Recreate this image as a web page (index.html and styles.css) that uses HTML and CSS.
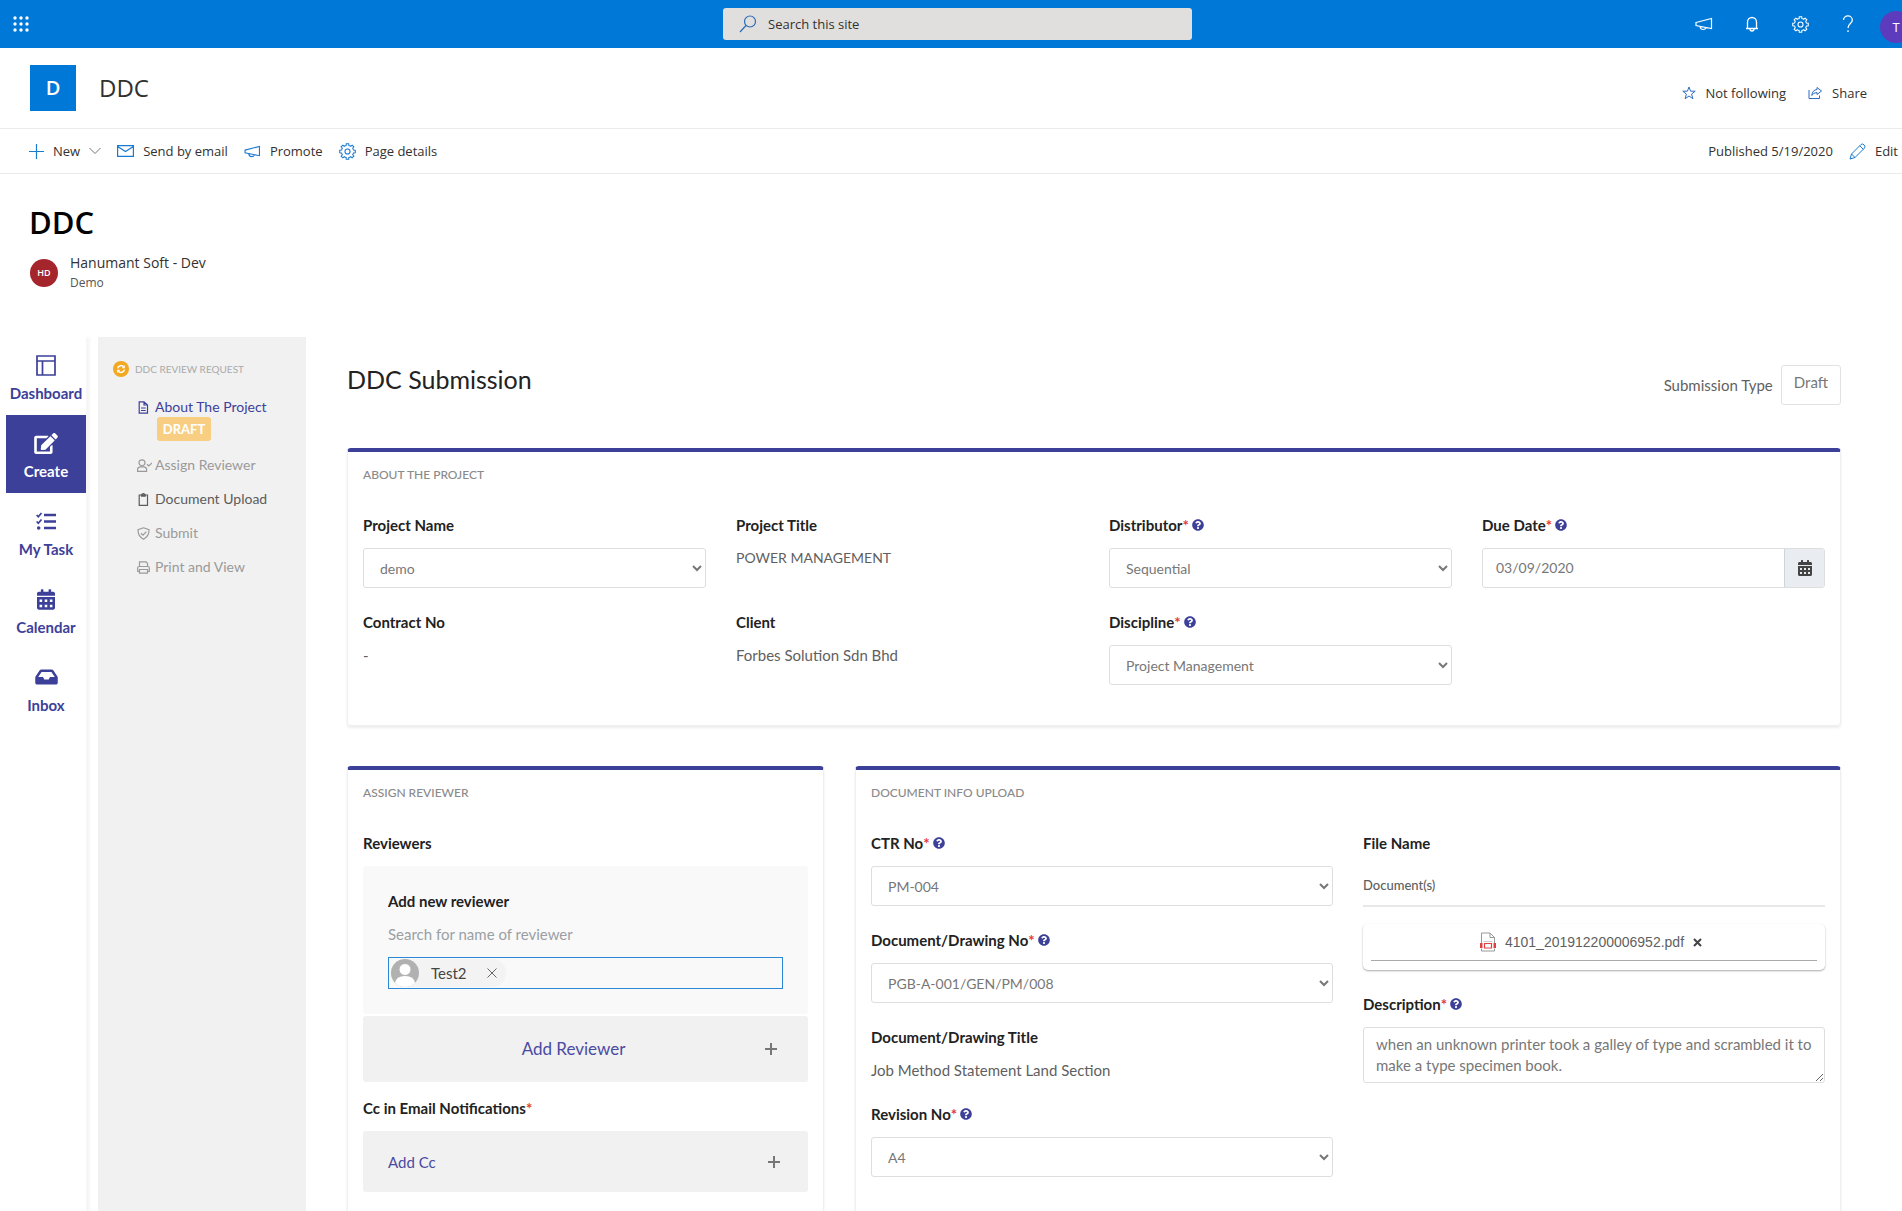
FILE: index.html
```html
<!DOCTYPE html>
<html lang="en">
<head>
<meta charset="utf-8">
<meta name="viewport" content="width=device-width, initial-scale=1">
<title>DDC</title>
<link rel="stylesheet" href="styles.css">
</head>
<body>
<svg class="sprite" aria-hidden="true">
  <symbol id="i-gear" viewBox="-8 -8 16 16">
    <g fill="none" stroke="currentColor">
      <g id="cog2"><g id="cog1"><path id="tooth" d="M-2.22-5.36L-1.3-5.65L-1.16-7.31H1.16L1.3-5.65L2.22-5.36"/><use href="#tooth" transform="rotate(45)"/></g><use href="#cog1" transform="rotate(90)"/></g>
      <use href="#cog2" transform="rotate(180)"/>
      <circle r="2.4"/>
    </g>
  </symbol>
  <symbol id="i-mega" viewBox="0 0 18 14">
    <path d="M1 5.500L16.500 1.500V11.500L1 8.500ZM5 9.500Q5.500 12.500 8 12.500T11 10.600" fill="none" stroke="currentColor" stroke-width="1.200"/>
  </symbol>
  <symbol id="i-help" viewBox="0 0 512 512">
    <path fill="currentColor" d="M504 256c0 136.997-111.043 248-248 248S8 392.997 8 256C8 119.083 119.043 8 256 8s248 111.083 248 248zM262.655 90c-54.497 0-89.255 22.957-116.549 63.758-3.536 5.286-2.353 12.415 2.715 16.258l34.699 26.31c5.205 3.947 12.621 3.008 16.665-2.122 17.864-22.658 30.113-35.797 57.303-35.797 20.429 0 45.698 13.148 45.698 32.958 0 14.976-12.363 22.667-32.534 33.976C247.128 238.528 216 254.941 216 296v4c0 6.627 5.373 12 12 12h56c6.627 0 12-5.373 12-12v-1.333c0-28.462 83.186-29.647 83.186-106.667 0-58.002-60.165-102-116.531-102zM256 338c-25.365 0-46 20.635-46 46 0 25.364 20.635 46 46 46s46-20.636 46-46c0-25.365-20.635-46-46-46z"/>
  </symbol>
  <symbol id="i-cal" viewBox="0 0 448 512">
    <path fill="currentColor" fill-rule="evenodd" d="M0 464c0 26.500 21.500 48 48 48h352c26.500 0 48-21.500 48-48V192H0zM64 256h64v64H64zM192 256h64v64h-64zM320 256h64v64h-64zM64 384h64v64H64zM192 384h64v64h-64zM320 384h64v64h-64zM400 64h-48V16c0-8.800-7.200-16-16-16h-32c-8.800 0-16 7.200-16 16v48H160V16c0-8.800-7.200-16-16-16h-32c-8.800 0-16 7.200-16 16v48H48C21.500 64 0 85.500 0 112v48h448v-48c0-26.500-21.500-48-48-48z"/>
  </symbol>
</svg>

<header class="suite">
  <button class="waffle" aria-label="App launcher">
    <svg width="16" height="16" viewBox="0 0 16 16" fill="currentColor"><circle cx="2" cy="2" r="1.700"/><circle cx="8" cy="2" r="1.700"/><circle cx="14" cy="2" r="1.700"/><circle cx="2" cy="8" r="1.700"/><circle cx="8" cy="8" r="1.700"/><circle cx="14" cy="8" r="1.700"/><circle cx="2" cy="14" r="1.700"/><circle cx="8" cy="14" r="1.700"/><circle cx="14" cy="14" r="1.700"/></svg>
  </button>
  <div class="search">
    <svg width="18" height="18" viewBox="0 0 18 18" fill="none" stroke="currentColor" stroke-width="1.200"><circle cx="11" cy="6.500" r="5.500"/><path d="M7 10.500L1 17"/></svg>
    <input type="search" placeholder="Search this site" aria-label="Search this site">
  </div>
  <div class="suite-tools">
    <button aria-label="Announcements"><svg width="18" height="14"><use href="#i-mega"/></svg></button>
    <button aria-label="Notifications"><svg width="14" height="16" viewBox="0 0 14 16" fill="none" stroke="currentColor" stroke-width="1.300"><path d="M1 12.500H13M2.500 12.500V6A4.500 4.500 0 0 1 11.500 6V12.500M5 13A2 2 0 0 0 9 13"/></svg></button>
    <button aria-label="Settings"><svg width="17" height="17"><use href="#i-gear"/></svg></button>
    <button aria-label="Help"><svg width="12" height="18" viewBox="0 0 12 18" fill="none" stroke="currentColor" stroke-width="1.300"><path d="M1.500 5A4.300 4 0 0 1 10.300 5C10.300 8.500 6 8.500 6 13M6 15.300V17"/></svg></button>
    <button aria-label="Account"><span class="me">T</span></button>
  </div>
</header>

<div class="site">
  <a class="site-logo" href="#">D</a>
  <a class="site-name" href="#">DDC</a>
  <div class="site-actions">
    <button><svg width="14" height="14" viewBox="0 0 14 14" fill="none" stroke="#2b6cc4"><path d="M7 1L8.600 5.200H13.200L9.600 8.100L10.900 12.700L7 10L3.100 12.700L4.400 8.100L.8 5.200H5.400Z"/></svg>Not following</button>
    <button><svg width="15" height="14" viewBox="0 0 15 14" fill="none" stroke="#2b6cc4"><path d="M9 1.500L13.500 5L9 8.500V6.500Q5.500 6.500 3.800 9.500Q4.300 4 9 3.500ZM1 4V12.500H11.500V9.500"/></svg>Share</button>
  </div>
</div>

<nav class="commands" aria-label="Page commands">
  <button><svg width="15" height="15" viewBox="0 0 15 15" fill="none" stroke="currentColor" stroke-width="1.200"><path d="M7.500 0V15M0 7.500H15"/></svg>New<svg class="chev" width="12" height="8" viewBox="0 0 12 8" fill="none" stroke="#777"><path d="M.5 1L6 6.500L11.500 1"/></svg></button>
  <button><svg width="17" height="12" viewBox="0 0 17 12" fill="none" stroke="currentColor" stroke-width="1.200"><path d="M.6.600H16.400V11.400H.6ZM.6 1.500L8.500 6.500L16.400 1.500"/></svg>Send by email</button>
  <button><svg width="17" height="13"><use href="#i-mega"/></svg>Promote</button>
  <button><svg width="17" height="17"><use href="#i-gear"/></svg>Page details</button>
  <span class="published">Published 5/19/2020</span>
  <button><svg width="17" height="17" viewBox="0 0 17 17" fill="none" stroke="currentColor"><path d="M1 16L2.500 11L12 1.500Q13.500.300 15 1.800Q16.600 3.500 15.500 5L6 14.500ZM2.500 11L6 14.500M10.800 2.800L14.200 6.200"/></svg>Edit</button>
</nav>

<div class="page-title">
  <h1>DDC</h1>
  <div class="author">
    <span class="author-pic">HD</span>
    <div><strong>Hanumant Soft - Dev</strong><small>Demo</small></div>
  </div>
</div>

<div class="app">
  <nav class="rail" aria-label="Main">
    <a href="#"><svg width="20" height="21" viewBox="0 0 20 21" fill="none" stroke="currentColor" stroke-width="1.700"><path d="M1 1H19V20H1ZM1 6H19M6.500 6V20"/></svg>Dashboard</a>
    <a href="#" class="on"><svg width="24" height="21" viewBox="0 0 576 512" fill="currentColor"><path d="M402.600 83.200l90.200 90.200c3.800 3.800 3.800 10 0 13.800L274.400 405.600l-92.800 10.300c-12.400 1.400-22.900-9.100-21.500-21.500l10.300-92.800L388.800 83.200c3.800-3.800 10-3.800 13.800 0zm162-22.900l-48.800-48.800c-15.200-15.200-39.900-15.200-55.200 0l-35.400 35.400c-3.800 3.800-3.800 10 0 13.800l90.200 90.200c3.800 3.800 10 3.800 13.800 0l35.400-35.400c15.200-15.300 15.200-40 0-55.200zM384 346.200V448H64V128h229.800c3.200 0 6.200-1.300 8.500-3.500l40-40c7.600-7.600 2.200-20.500-8.500-20.500H48C21.500 64 0 85.500 0 112v352c0 26.500 21.500 48 48 48h352c26.500 0 48-21.500 48-48V306.200c0-10.700-12.900-16-20.500-8.500l-40 40c-2.200 2.300-3.500 5.300-3.500 8.500z"/></svg>Create</a>
    <a href="#"><svg width="20" height="18" viewBox="0 0 20 18" fill="none" stroke="currentColor"><path d="M8 3H20M8 9.500H20M8 16H20" stroke-width="2.500"/><path d="M.6 3L2.300 4.700L5.500 1M.6 9.500L2.300 11.200L5.500 7.500" stroke-width="1.700"/><circle cx="2.700" cy="16" r="1.800" fill="currentColor" stroke="none"/></svg>My Task</a>
    <a href="#"><svg width="18" height="21"><use href="#i-cal"/></svg>Calendar</a>
    <a href="#"><svg width="23" height="20" viewBox="0 0 576 512" fill="currentColor"><path d="M567.938 243.908L462.250 85.374A48.003 48.003 0 0 0 422.311 64H153.689a48 48 0 0 0-39.938 21.374L8.062 243.908A47.994 47.994 0 0 0 0 270.533V400c0 26.510 21.490 48 48 48h480c26.510 0 48-21.490 48-48V270.533a47.994 47.994 0 0 0-8.062-26.625zM162.252 128h251.497l85.333 128H376l-32 64H232l-32-64H76.918l85.334-128z"/></svg>Inbox</a>
  </nav>

  <aside class="steps">
    <h2><svg width="16" height="16" viewBox="0 0 16 16"><circle cx="8" cy="8" r="8" fill="#f3a821"/><path d="M4.600 7.400A3.500 3.500 0 0 1 10.800 5.900M11.400 8.600A3.500 3.500 0 0 1 5.200 10.100" fill="none" stroke="#fff" stroke-width="1.500"/><path d="M11.800 4V7.200H8.600ZM4.200 12V8.800H7.400Z" fill="#fff"/></svg>DDC REVIEW REQUEST</h2>
    <ul>
      <li class="now"><a href="#"><svg width="15" height="13" viewBox="0 0 15 13" fill="none" stroke="currentColor" stroke-width="1.200"><path d="M2.200 .8H7L10.500 4V12.200H2.200ZM7 .8V4H10.500M4 7H8.700M4 9.500H8.700"/></svg>About The Project</a><span class="badge">DRAFT</span></li>
      <li><a href="#"><svg width="15" height="13" viewBox="0 0 15 13" fill="none" stroke="currentColor" stroke-width="1.200"><circle cx="5" cy="3.800" r="3"/><path d="M.6 12.300V10.500Q.6 8.200 3 7.800H7Q9.600 8.200 9.600 10.500V12.300ZM10 5.300L11.800 7L15 4"/></svg>Assign Reviewer</a></li>
      <li class="open"><a href="#"><svg width="15" height="13" viewBox="0 0 15 13" fill="none" stroke="currentColor" stroke-width="1.200"><path d="M2.200 2H10.500V12.300H2.200ZM4.500 3.200H8.200V1.500L6.400.500L4.500 1.500Z"/></svg>Document Upload</a></li>
      <li><a href="#"><svg width="15" height="13" viewBox="0 0 15 13" fill="none" stroke="currentColor" stroke-width="1.200"><path d="M6.500.800L12 2.700Q12.200 9 6.500 12.200Q.800 9 1 2.700ZM4 6.300L6 8.200L9.300 4.600"/></svg>Submit</a></li>
      <li><a href="#"><svg width="15" height="13" viewBox="0 0 15 13" fill="none" stroke="currentColor" stroke-width="1.200"><path d="M2.500 5.500V.800H9L10.500 2.200V5.500M2.500 10.500H.7V7Q.7 5.500 2 5.500H11Q12.300 5.500 12.300 7V10.500H10.500M2.500 8.500H10.500V12.200H2.500Z"/></svg>Print and View</a></li>
    </ul>
  </aside>

  <main class="main">
    <div class="main-head">
      <h2>DDC Submission</h2>
      <div class="type">Submission Type <span class="type-box">Draft</span></div>
    </div>

    <section class="card">
      <h3>ABOUT THE PROJECT</h3>
      <div class="grid four">
        <div class="field"><label for="pname">Project Name</label><select id="pname"><option>demo</option></select></div>
        <div class="field"><span class="label">Project Title</span><p class="caps">POWER MANAGEMENT</p></div>
        <div class="field"><label for="dist">Distributor<i>*</i><svg class="help"><use href="#i-help"/></svg></label><select id="dist"><option>Sequential</option></select></div>
        <div class="field"><label for="due">Due Date<i>*</i><svg class="help"><use href="#i-help"/></svg></label><div class="date"><input id="due" type="text" value="03/09/2020"><button aria-label="Pick a date"><svg width="14" height="16"><use href="#i-cal"/></svg></button></div></div>
        <div class="field"><span class="label">Contract No</span><p>-</p></div>
        <div class="field"><span class="label">Client</span><p>Forbes Solution Sdn Bhd</p></div>
        <div class="field"><label for="disc">Discipline<i>*</i><svg class="help"><use href="#i-help"/></svg></label><select id="disc"><option>Project Management</option></select></div>
      </div>
    </section>

    <div class="cards">
      <section class="card">
        <h3>ASSIGN REVIEWER</h3>
        <span class="label">Reviewers</span>
        <div class="panel">
          <span class="label">Add new reviewer</span>
          <label class="hint" for="people">Search for name of reviewer</label>
          <div class="picker">
            <span class="chip"><svg width="28" height="28" viewBox="0 0 28 28"><circle cx="14" cy="14" r="14" fill="#b1b1b1"/><path d="M4 24Q5 17 14 17T24 24Q20 28 14 28T4 24Z" fill="#fff"/><circle cx="14" cy="10.500" r="6" fill="#fff" stroke="#b1b1b1"/></svg>Test2<button aria-label="Remove Test2"><svg width="10" height="10" viewBox="0 0 10 10" stroke="#666"><path d="M.5.500L9.500 9.500M9.500.500L.5 9.500"/></svg></button></span>
            <input id="people" type="text">
          </div>
        </div>
        <button class="add big"><span>Add Reviewer</span><svg width="14" height="14" viewBox="0 0 14 14" stroke="#777" stroke-width="2"><path d="M7 1V13M1 7H13"/></svg></button>
        <span class="label">Cc in Email Notifications<i>*</i></span>
        <button class="add"><span>Add Cc</span><svg width="12" height="12" viewBox="0 0 12 12" stroke="#777" stroke-width="2"><path d="M6 0V12M0 6H12"/></svg></button>
      </section>

      <section class="card">
        <h3>DOCUMENT INFO UPLOAD</h3>
        <div class="grid two">
          <div>
            <div class="field"><label for="ctr">CTR No<i>*</i><svg class="help"><use href="#i-help"/></svg></label><select id="ctr"><option>PM-004</option></select></div>
            <div class="field"><label for="drw">Document/Drawing No<i>*</i><svg class="help"><use href="#i-help"/></svg></label><select id="drw"><option>PGB-A-001/GEN/PM/008</option></select></div>
            <div class="field"><span class="label">Document/Drawing Title</span><p>Job Method Statement Land Section</p></div>
            <div class="field"><label for="rev">Revision No<i>*</i><svg class="help"><use href="#i-help"/></svg></label><select id="rev"><option>A4</option></select></div>
          </div>
          <div>
            <span class="label">File Name</span>
            <h4>Document(s)</h4>
            <div class="file">
              <div class="file-row">
                <svg width="16" height="20" viewBox="0 0 16 20" fill="none"><path d="M1.500 11V1H10L14.500 5.500V11M10 1V5.500H14.500M1.500 16.500V19H14.500V16.500" stroke="#999"/><path d="M3.500 9.500H12.500" stroke="#ccc"/><path d="M4.500 11.500H11.500V16H4.500Z" stroke="#e04040" stroke-width="1.200"/><path d="M0 11H2.500V16H0ZM13.500 11H16V16H13.500Z" fill="#e04040"/></svg>
                <a href="#">4101_201912200006952.pdf</a>
                <button aria-label="Remove file"><svg width="9" height="9" viewBox="0 0 9 9" stroke="#444" stroke-width="2"><path d="M1 1L8 8M8 1L1 8"/></svg></button>
              </div>
            </div>
            <div class="field"><label for="desc">Description<i>*</i><svg class="help"><use href="#i-help"/></svg></label><textarea id="desc">when an unknown printer took a galley of type and scrambled it to make a type specimen book.</textarea></div>
          </div>
        </div>
      </section>
    </div>
  </main>
</div>
</body>
</html>
```

FILE: styles.css
```css
* { box-sizing: border-box; }
html, body { height: 100%; }
body {
  margin: 0;
  display: flex;
  flex-direction: column;
  overflow: hidden;
  font: 13px/20px "Open Sans", sans-serif;
  color: #323130;
  background: #fff;
}
h1, h2, h3, h4, p, ul { margin: 0; padding: 0; font-weight: 400; }
ul { list-style: none; }
a { color: inherit; text-decoration: none; }
button { border: 0; padding: 0; background: none; font: inherit; color: inherit; }
input, select, textarea { font: inherit; color: inherit; }
svg { flex: none; }
.sprite { position: absolute; width: 0; height: 0; }

/* suite bar */
.suite {
  flex: none;
  display: grid;
  grid-template-columns: 1fr minmax(0, 469px) 1fr;
  align-items: center;
  height: 48px;
  padding-left: 13px;
  overflow: hidden;
  background: #0078d7;
  color: #fff;
}
.waffle { justify-self: start; display: flex; }
.search {
  display: flex;
  align-items: center;
  gap: 9px;
  height: 32px;
  padding: 0 16px;
  border-radius: 3px;
  background: #e1dfdd;
  color: #2b6cb8;
}
.search input { flex: 1; min-width: 0; border: 0; background: none; color: #323130; }
.search input::placeholder { color: #323130; }
.suite-tools { display: flex; justify-self: end; margin-right: -18px; }
.suite-tools button { display: grid; place-items: center; width: 48px; height: 48px; }
.me {
  display: grid;
  place-items: center;
  width: 32px;
  height: 32px;
  margin-top: 6px;
  border-radius: 50%;
  background: #5c3bbd;
}

/* site header */
.site {
  flex: none;
  display: flex;
  align-items: center;
  height: 81px;
  padding: 0 35px 0 30px;
  border-bottom: 1px solid #eaeaea;
}
.site-logo {
  display: grid;
  place-items: center;
  width: 46px;
  height: 46px;
  margin-right: 23px;
  background: #0078d7;
  color: #fff;
  font-size: 20px;
  font-weight: 600;
}
.site-name { font-size: 24px; line-height: 32px; font-weight: 500; }
.site-actions { display: flex; gap: 22px; margin: 10px 0 0 auto; }
.site-actions button, .commands button { display: flex; align-items: center; gap: 9px; }

/* command bar */
.commands {
  flex: none;
  display: flex;
  align-items: center;
  gap: 16px;
  height: 45px;
  padding: 0 4px 0 29px;
  border-bottom: 1px solid #eaeaea;
}
.commands svg { color: #1a7ad0; }
.published { margin-left: auto; }

/* page title */
.page-title { flex: none; height: 163px; padding: 28px 29px 0; }
.page-title h1 { font-size: 31px; line-height: 40px; font-weight: 600; color: #000; }
.author { display: flex; align-items: center; gap: 12px; margin-top: 11px; padding-left: 1px; }
.author-pic {
  display: grid;
  place-items: center;
  width: 28px;
  height: 28px;
  border-radius: 50%;
  background: #a4262c;
  color: #fff;
  font-size: 9px;
  font-weight: 600;
}
.author strong, .author small { display: block; font-size: 14px; font-weight: 500; }
.author small { font-size: 12px; font-weight: 400; color: #555; }

/* application */
.app {
  flex: 1;
  min-height: 0;
  display: grid;
  grid-template-columns: 86px 208px minmax(0, 1fr);
  column-gap: 12px;
  overflow-y: auto;
  scrollbar-width: none;
  font-family: Lato, sans-serif;
  font-size: 15px;
  color: #5f5f5f;
}
.rail { padding-left: 6px; box-shadow: 4px 0 3px #f6f6f6; }
.rail a {
  display: grid;
  grid-template-rows: 22px 20px;
  row-gap: 7px;
  place-items: center;
  height: 78px;
  padding: 17px 0 12px;
  color: #3d4099;
  font-weight: 700;
}
.rail .on { background: #3d4099; color: #fff; }

.steps { padding: 22px 15px; background: #f1f1f1; color: #9a9a9a; font-size: 14px; }
.steps h2 { display: flex; align-items: center; gap: 6px; font-size: 10px; line-height: 20px; color: #aaa; }
.steps ul { padding: 18px 0 0 24px; }
.steps li { margin-bottom: 14px; }
.steps li a { display: flex; align-items: center; gap: 3px; }
.steps .now { color: #3d4099; }
.steps .open { color: #5c5c5c; }
.badge {
  display: block;
  width: 54px;
  margin-left: 20px;
  border-radius: 3px;
  background: #f8cf82;
  color: #fff;
  font-size: 13px;
  line-height: 24px;
  font-weight: 700;
  text-align: center;
}

.main { padding: 28px 61px 0 29px; }
.main-head { display: flex; justify-content: space-between; height: 83px; }
.main-head h2 { font-size: 25px; line-height: 28px; color: #222; }
.type { display: flex; align-items: center; gap: 8px; height: 40px; }
.type-box { height: 40px; padding: 6px 12px; border: 1px solid #e2e2e2; border-radius: 3px; color: #777; }

.card {
  padding: 13px 15px 16px;
  border: 1px solid #efefef;
  border-top: 4px solid #3d4099;
  border-radius: 4px;
  box-shadow: 0 2px 3px #ededed;
}
.card h3 { margin-bottom: 30px; font-size: 12px; font-weight: 500; line-height: 20px; color: #8a8a8a; }
.cards {
  display: grid;
  grid-template-columns: minmax(0, 477fr) minmax(0, 986fr);
  gap: 31px;
  min-height: 480px;
  margin-top: 40px;
}
.grid { display: grid; column-gap: 30px; }
.four { grid-template-columns: repeat(4, minmax(0, 1fr)); }
.two { grid-template-columns: repeat(2, minmax(0, 1fr)); }
.field { margin-bottom: 24px; }
.field label, .label {
  display: flex;
  align-items: center;
  height: 20px;
  margin-bottom: 13px;
  font-weight: 700;
  color: #222;
}
.caps { font-size: 14px; }
i { color: #e53935; font-style: normal; }
.help { width: 12px; height: 12px; margin-left: 3px; color: #3d4099; }
select, .date, textarea { width: 100%; border: 1px solid #dedede; border-radius: 3px; background: #fff; color: #777; }
select { display: block; height: 40px; padding: 0 0 0 12px; font-size: 14px; }
.date { display: flex; height: 40px; font-size: 14px; }
.date input { flex: 1; min-width: 0; padding: 0 13px; border: 0; background: none; }
.date button {
  display: grid;
  place-items: center;
  width: 40px;
  border-left: 1px solid #ced4da;
  background: #e9ecf1;
  color: #444;
}

.panel { height: 148px; padding: 25px; border-radius: 3px; background: #f9f9f9; }
.hint { display: block; margin-bottom: 13px; color: #9a9fa4; }
.picker { display: flex; align-items: center; height: 32px; border: 1px solid #2b88d8; }
.picker input { flex: 1; min-width: 0; border: 0; background: none; outline: 0; }
.chip {
  display: flex;
  align-items: center;
  gap: 12px;
  height: 28px;
  margin-left: 2px;
  padding-right: 9px;
  border-radius: 14px;
  background: #f3f3f3;
  color: #444;
}
.chip button { display: flex; margin-left: 8px; }
.add {
  display: flex;
  align-items: center;
  width: 100%;
  height: 61px;
  padding: 0 28px 0 25px;
  border-radius: 3px;
  background: #f1f1f1;
  color: #4a4aa3;
}
.add span { flex: 1; text-align: left; }
.big { height: 66px; margin: 2px 0 16px; padding: 0 30px 0 20px; font-size: 17px; }
.big span { text-align: center; }

.card h4 {
  margin-bottom: 17px;
  padding: 9px 0 10px;
  border-bottom: 2px solid #e8e8e8;
  font-size: 13px;
  font-weight: 500;
}
.file {
  height: 46px;
  margin-bottom: 24px;
  padding: 0 8px;
  border-radius: 5px;
  box-shadow: 0 1px 2px #aaa;
}
.file-row {
  display: flex;
  align-items: center;
  justify-content: center;
  gap: 9px;
  height: 37px;
  padding-right: 6px;
  border-bottom: 1px solid #aaa;
  font: 14px/20px "Liberation Sans", sans-serif;
}
textarea { display: block; height: 56px; padding: 6px 12px; line-height: 21px; resize: vertical; overflow: hidden; }
```
